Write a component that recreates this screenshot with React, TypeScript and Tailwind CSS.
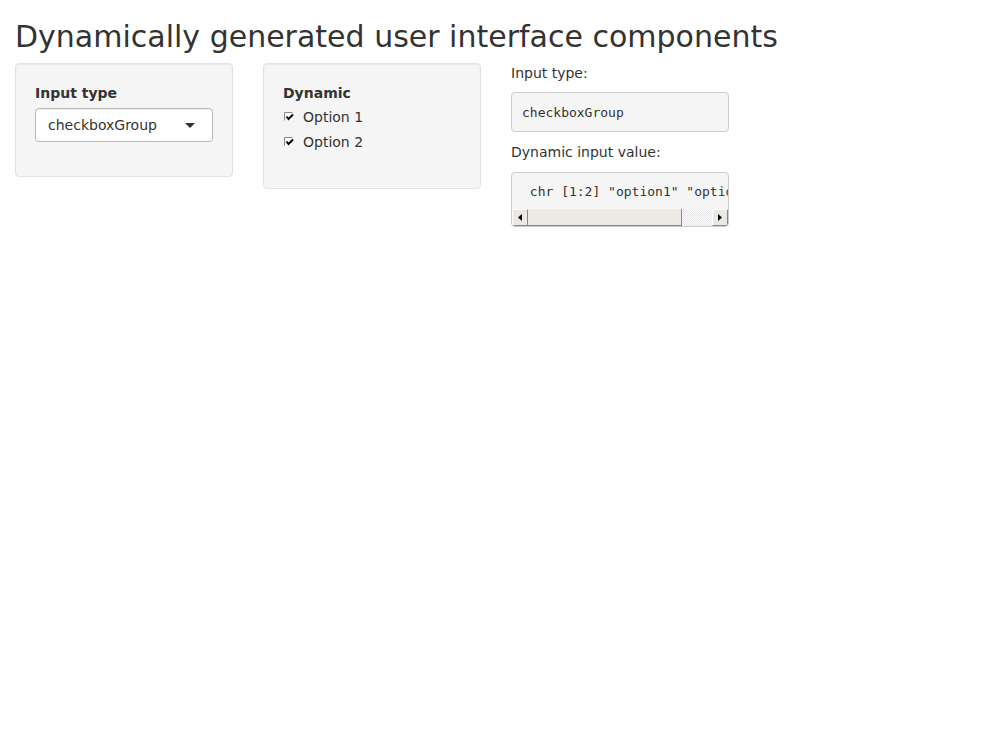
const font = "font-['DejaVu_Sans',sans-serif]";
const mono = "font-['DejaVu_Sans_Mono',monospace]";

function CheckIcon() {
  return (
    <svg width="11" height="11" viewBox="0 0 11 11" className="shrink-0">
      <path d="M0.5 0.5 H8.5 M0.5 0.5 V8.5" stroke="#8a8a8a" strokeWidth="1" fill="none" />
      <path d="M1.5 1.5 H8 V8 H1.5 Z" fill="#fff" />
      <path d="M2.5 4.5 L4.5 7 L9 2.5" stroke="#000" strokeWidth="2" fill="none" />
    </svg>
  );
}

function Checkbox({ label }: { label: string }) {
  return (
    <div className="flex h-[20px] items-center gap-[8px] pl-[1px]">
      <CheckIcon />
      <span>{label}</span>
    </div>
  );
}

function ScrollBar() {
  return (
    <div className="flex h-[17px] bg-[#f5f5f5]">
      <div className="flex w-[16px] items-center justify-center border-r border-b border-[#888] border-l border-l-white border-t border-t-white bg-[#ece9e4]">
        <svg width="4" height="7" viewBox="0 0 4 7">
          <path d="M4 0 L0 3.5 L4 7 Z" fill="#000" />
        </svg>
      </div>
      <div className="w-[154px] border-r border-b border-[#888] bg-[#ece9e4]" />
      <div className="flex-1 bg-[repeating-conic-gradient(#e8e8e8_0_25%,#fafafa_0_50%)] bg-[length:2px_2px]" />
      <div className="flex w-[16px] items-center justify-center border-r border-b border-[#888] border-l border-l-white border-t border-t-white bg-[#ece9e4]">
        <svg width="4" height="7" viewBox="0 0 4 7">
          <path d="M0 0 L4 3.5 L0 7 Z" fill="#000" />
        </svg>
      </div>
    </div>
  );
}

export default function App() {
  return (
    <div className={`min-h-[744px] bg-white px-[15px] text-[14px] leading-[20px] text-[#333] ${font}`}>
      <h2 className="mt-[20px] mb-[10px] text-[30px] leading-[33px] font-normal">
        Dynamically generated user interface components
      </h2>
      <div className="mx-[-15px] grid grid-cols-4 items-start">
        <div className="px-[15px]">
          <div className="rounded-[4px] border border-[#e3e3e3] bg-[#f5f5f5] p-[19px] shadow-[inset_0_1px_1px_rgba(0,0,0,0.05)]">
            <div className="mb-[15px]">
              <label className="mb-[5px] block font-bold">Input type</label>
              <div className="flex h-[34px] items-center justify-between rounded-[4px] border border-[#b8b8b8] bg-white pr-[17px] pl-[12px] shadow-[inset_0_1px_1px_rgba(0,0,0,0.075)]">
                <span>checkboxGroup</span>
                <svg width="10" height="5" viewBox="0 0 10 5">
                  <path d="M0 0 H10 L5 5 Z" fill="#333" />
                </svg>
              </div>
            </div>
          </div>
        </div>
        <div className="px-[15px]">
          <div className="rounded-[4px] border border-[#e3e3e3] bg-[#f5f5f5] p-[19px] shadow-[inset_0_1px_1px_rgba(0,0,0,0.05)]">
            <div className="mb-[17px]">
              <label className="mb-[4px] block font-bold">Dynamic</label>
              <div className="flex flex-col gap-[5px]">
                <Checkbox label="Option 1" />
                <Checkbox label="Option 2" />
              </div>
            </div>
          </div>
        </div>
        <div className="px-[15px]">
          <p className="mb-[9px]">Input type:</p>
          <pre className={`mb-[10px] rounded-[4px] border border-[#ccc] bg-[#f5f5f5] px-[10px] py-[9.5px] text-[13px] leading-[19px] text-[#333] ${mono}`}>
            checkboxGroup
          </pre>
          <p className="mb-[10px]">Dynamic input value:</p>
          <div className="overflow-hidden rounded-[4px] border border-[#ccc] bg-[#f5f5f5]">
            <pre className={`overflow-hidden whitespace-pre px-[10px] pt-[9px] pb-[8px] text-[13px] leading-[19px] text-[#333] ${mono}`}>
              {' chr [1:2] "option1" "option2"'}
            </pre>
            <ScrollBar />
          </div>
        </div>
      </div>
    </div>
  );
}
